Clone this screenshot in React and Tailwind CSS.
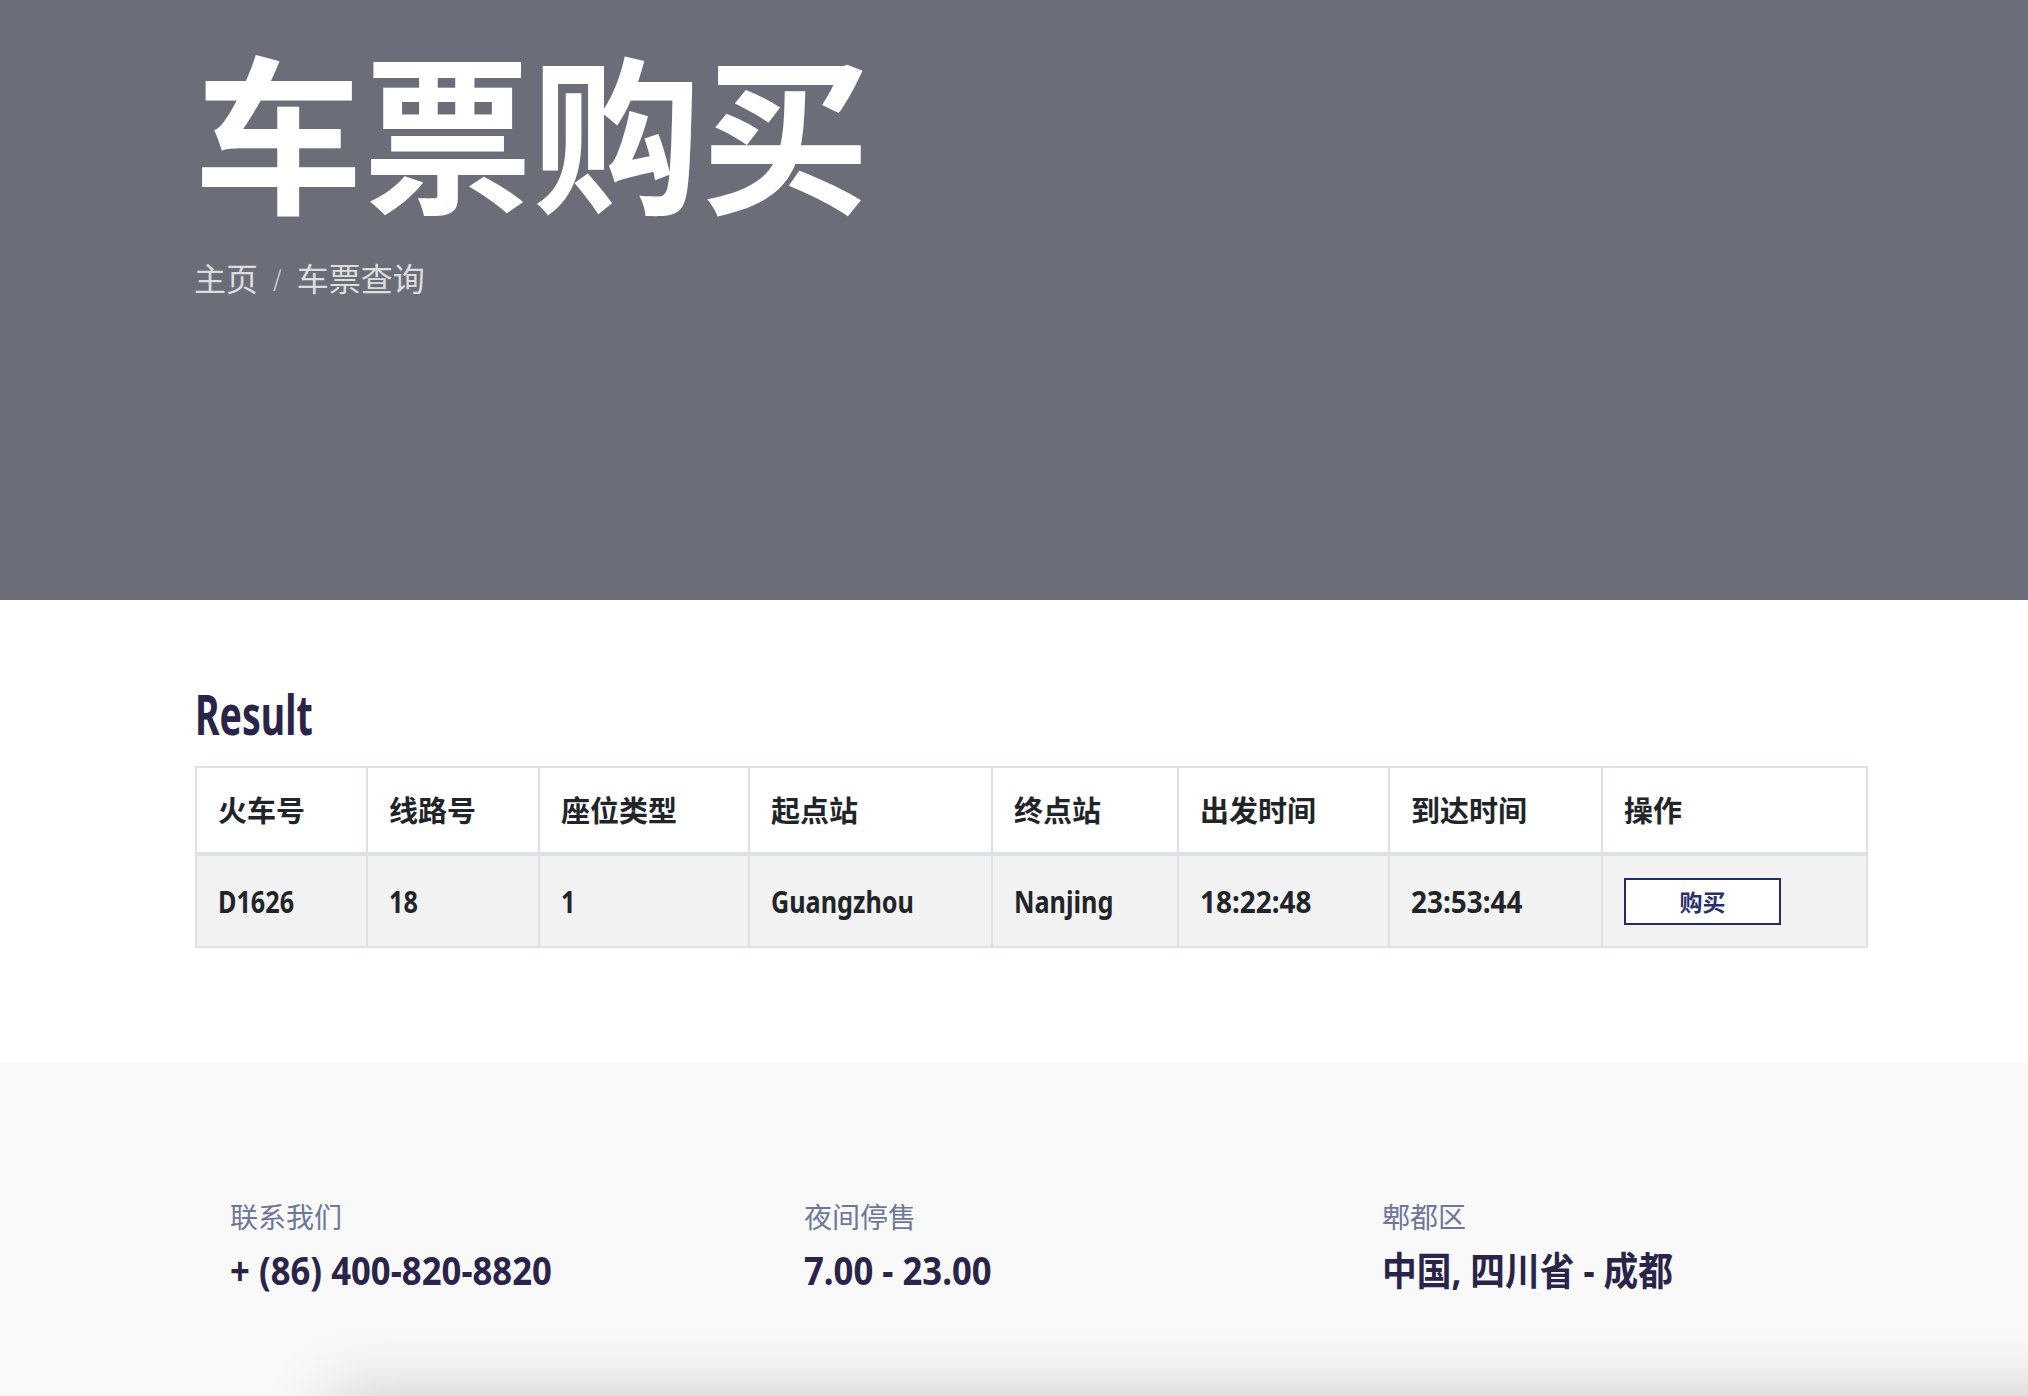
import React from 'react';

const cjk = "font-['Noto_Sans_CJK_SC',sans-serif]";
const latin = "font-['Noto_Sans','Noto_Sans_CJK_SC',sans-serif]";

const columns = [
  { label: '火车号', width: 'w-[169px]' },
  { label: '线路号', width: 'w-[172px]' },
  { label: '座位类型', width: 'w-[210px]' },
  { label: '起点站', width: 'w-[243px]' },
  { label: '终点站', width: 'w-[186px]' },
  { label: '出发时间', width: 'w-[211px]' },
  { label: '到达时间', width: 'w-[213px]' },
  { label: '操作', width: 'w-[265px]' },
];

const ticket = ['D1626', '18', '1', 'Guangzhou', 'Nanjing', '18:22:48', '23:53:44'];

const contacts = [
  { label: '联系我们', value: '+ (86) 400-820-8820' },
  { label: '夜间停售', value: '7.00 - 23.00' },
  { label: '郫都区', value: '中国, 四川省 - 成都' },
];

export default function App() {
  return (
    <div className={`h-[1396px] w-[2028px] overflow-hidden bg-white ${cjk}`}>
      {/* Hero */}
      <header className="h-[600px] bg-[#6b6e79] pl-[194px] pt-[43px]">
        <h1 className="text-[169px] font-bold leading-none text-white">车票购买</h1>
        <nav className="mt-[49px] flex items-center text-[32px] leading-none text-[#dddddd]">
          <span>主页</span>
          <span className="mx-[15px] text-[22px] text-[#cfcfcf]">/</span>
          <span>车票查询</span>
        </nav>
      </header>

      {/* Result */}
      <main className="h-[463px] pl-[195px] pt-[85px]">
        <h2 className={`${latin} inline-block origin-left scale-x-[0.67] text-[56px] font-bold leading-none text-[#2a2449]`}>
          Result
        </h2>

        <div className="mt-[25px] w-[1673px] border-2 border-[#dee2e6] text-[#212529]">
          <div className="flex h-[88px] border-b-4 border-[#dee2e6] bg-white">
            {columns.map((col, i) => (
              <div
                key={col.label}
                className={`${col.width} flex items-center pl-[21px] text-[29px] font-bold ${i ? 'border-l-2 border-[#dee2e6]' : ''}`}
              >
                {col.label}
              </div>
            ))}
          </div>
          <div className="flex h-[90px] bg-[#f2f2f2]">
            {columns.map((col, i) => (
              <div
                key={col.label}
                className={`${col.width} flex items-center pl-[21px] ${i ? 'border-l-2 border-[#dee2e6]' : ''}`}
              >
                {i < ticket.length ? (
                  <span
                    className={`${latin} inline-block origin-left text-[30px] font-bold ${i >= 5 ? 'scale-x-[0.93]' : 'scale-x-[0.84]'}`}
                  >
                    {ticket[i]}
                  </span>
                ) : (
                  <button className="flex h-[47px] w-[157px] items-center justify-center border-2 border-[#222a70] bg-white text-[23px] font-bold text-[#29306f]">
                    购买
                  </button>
                )}
              </div>
            ))}
          </div>
        </div>
      </main>

      {/* Footer */}
      <footer className="relative h-[333px] overflow-hidden bg-[#f9f9f9] pl-[230px] pt-[139px]">
        <div className="grid grid-cols-[574px_578px_1fr]">
          {contacts.map((c) => (
            <div key={c.label}>
              <div className="text-[28px] leading-none text-[#6e7799]">{c.label}</div>
              <div className={`${latin} mt-[20px] inline-block origin-left scale-x-[0.89] whitespace-nowrap text-[39px] font-bold leading-none text-[#2a2449]`}>
                {c.value}
              </div>
            </div>
          ))}
        </div>
        <div className="absolute left-[330px] right-[-120px] top-full h-[200px] bg-white shadow-[0_0_70px_rgba(0,0,0,0.2)]" />
      </footer>
    </div>
  );
}
